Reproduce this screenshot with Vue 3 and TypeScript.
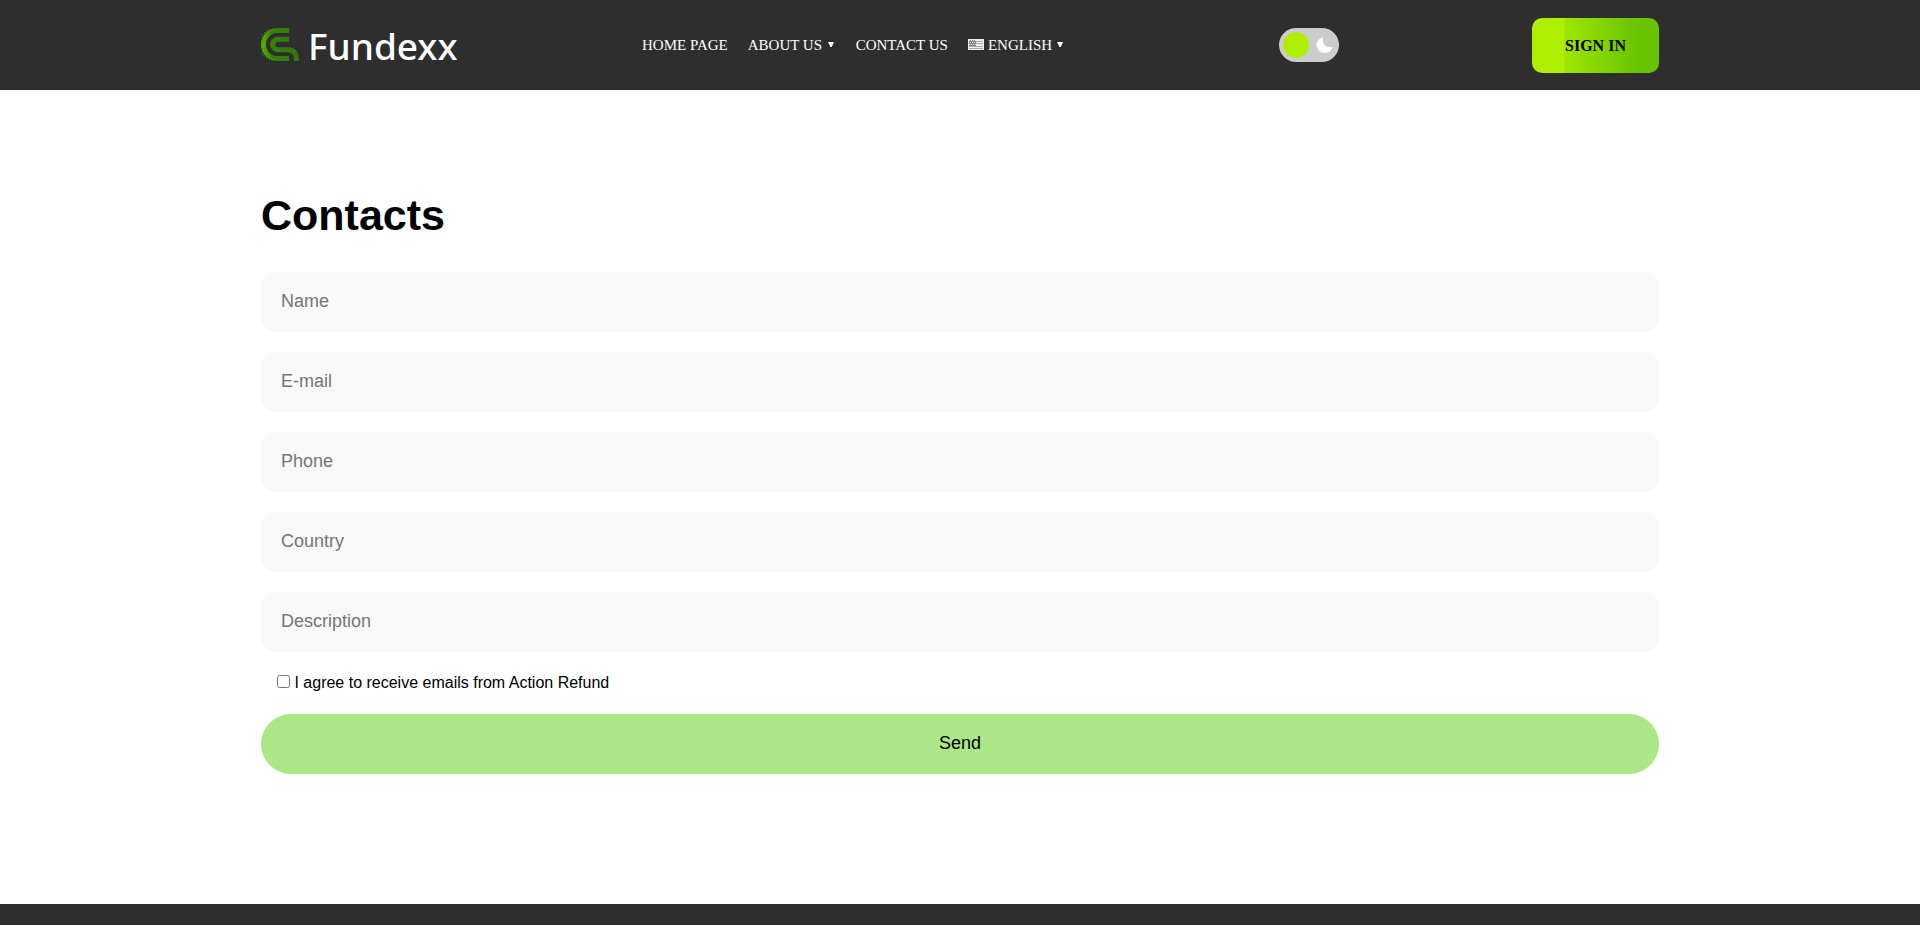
<script setup lang="ts">
import { ref } from 'vue'

interface Field {
  name: string
  type: string
  label: string
}

const fields: Field[] = [
  { name: 'name', type: 'text', label: 'Name' },
  { name: 'email', type: 'email', label: 'E-mail' },
  { name: 'phone', type: 'tel', label: 'Phone' },
  { name: 'country', type: 'text', label: 'Country' },
  { name: 'description', type: 'text', label: 'Description' },
]
const agreed = ref(false)
const dark = ref(false)
</script>

<template>
  <div class="page">
    <header class="header">
      <div class="container bar">
        <a class="logo">
          <svg width="204" height="54" viewBox="0 -4 204 54">
            <defs>
              <linearGradient id="mark" x1="0" x2="38" y1="0" y2="0" gradientUnits="userSpaceOnUse">
                <stop offset="0" stop-color="#55bb00" />
                <stop offset="0.3" stop-color="#378008" />
                <stop offset="1" stop-color="#327909" />
              </linearGradient>
            </defs>
            <g fill="none" stroke="url(#mark)" stroke-width="5">
              <path d="M28 8.500H16.500a14 14 0 0 0 0 28H28" />
              <path d="M28 17.200H17a5.200 5.200 0 0 0 0 10.500H27C33 27.700 35.500 31 35.500 39" />
            </g>
            <g fill="none" stroke-dasharray="1 2">
              <path stroke="#2e6f0a" d="M14 9.500a13 13 0 0 0 0 26" />
              <path stroke="#64cb00" d="M12.500 7.500a15 15 0 0 0 0 30" />
              <path stroke="#2e4a1e" d="M31 28.500C34.500 30 36.500 33 36.500 39" />
            </g>
            <text class="wordmark" x="47" y="38" textLength="149.500" lengthAdjust="spacingAndGlyphs">Fundexx</text>
          </svg>
        </a>
        <nav class="nav">
          <a class="item">HOME PAGE</a>
          <a class="item about">ABOUT US<i class="caret" /></a>
          <a class="item contact">CONTACT US</a>
          <a class="item language">
            <svg class="flag" width="16" height="11" viewBox="0 0 16 11">
              <path fill="#efefef" d="M0 0h16v11H0z" />
              <path stroke="#aaa" d="M8 2.500h7M8 4.500h7M1 7.500h14M1 9.500h14" />
              <path fill="#858585" d="M1 1h7v6H1z" />
              <path stroke="#e6e6e6" stroke-dasharray="1 1" d="M1 1.500h7M2 3.500h6M1 5.500h7" />
            </svg>ENGLISH<i class="caret" />
          </a>
        </nav>
        <button class="toggle" type="button" aria-label="Theme" @click="dark = !dark">
          <span class="knob" />
          <svg width="18" height="18" viewBox="0 0 18 18">
            <path fill="#fff" d="M7.300 1.300A7.900 7.900 0 0 0 9 17A8 8 0 0 0 16.700 10.700C10.500 13 5 8 7.300 1.300z" />
          </svg>
        </button>
        <a class="signin">SIGN IN</a>
      </div>
    </header>
    <main class="container main">
      <h1>Contacts</h1>
      <form @submit.prevent>
        <input v-for="field in fields" :key="field.name" class="field" :name="field.name" :type="field.type" :placeholder="field.label">
        <label class="agree"><input v-model="agreed" type="checkbox"><span>I agree to receive emails from Action Refund</span></label>
        <button class="send" type="submit">Send</button>
      </form>
    </main>
    <footer class="footer" />
  </div>
</template>

<style>
body { margin: 0; overflow: hidden; }
</style>

<style scoped>
.page { height: 925px; display: flex; flex-direction: column; background: #fff; font-family: "Liberation Sans", Arial, sans-serif; }
.header { height: 90px; flex: none; background: #2e2e2e; }
.container { width: 1398px; margin: 0 auto; }
.bar { height: 90px; display: flex; align-items: center; }
.logo { width: 381px; height: 54px; }
.logo svg { display: block; }
.wordmark { fill: #fff; font: 500 36px "Noto Sans", "Open Sans", sans-serif; }
.nav { display: flex; width: 637px; font: 15px/20px "Liberation Serif", "Times New Roman", serif; color: #fff; }
.item { display: flex; align-items: center; white-space: nowrap; margin-right: 20px; }
.caret { width: 6px; height: 5px; margin: 0 1.6px 1px 6px; background: #fff; clip-path: polygon(0 0, 100% 0, 60% 100%, 40% 100%); }
.flag { margin: -1px 4px 0 0; }
.language .caret { margin-left: 5px; }
.toggle { width: 60px; height: 34px; border: 0; border-radius: 17px; background: #ccc; display: flex; align-items: center; justify-content: space-between; padding: 0 5px 0 4px; }
.knob { width: 26px; height: 26px; border-radius: 50%; background: #aeef00; }
.signin { margin-left: auto; width: 127px; height: 55px; border-radius: 10px; background: linear-gradient(90deg, #aeef00 0 25%, #9fe500 26%, #69c400 82% 100%); text-align: center; color: #000; font: bold 16px/55px "Liberation Serif", "Times New Roman", serif; }
.main { flex: 1; }
h1 { margin: 100px 0 32px; font-size: 43px; line-height: 50px; font-weight: bold; color: #000; }
form { display: flex; flex-direction: column; }
.field { height: 60px; box-sizing: border-box; border: 0; border-radius: 15px; margin: 0 0 20px; padding: 0 20px 2px; background: #f8f8f8; font: 18px "Liberation Sans", Arial, sans-serif; outline: 0; }
.field::placeholder { color: #757575; }
.agree { height: 22px; display: flex; align-items: center; gap: 4.45px; padding-left: 16px; font-size: 16px; line-height: 20px; color: #000; }
.agree input { width: 13px; height: 13px; margin: 0 0 3px; }
.send { height: 60px; margin-top: 20px; padding: 0 0 2px; border: 0; border-radius: 30px; background: #abe687; color: #000; font: 18px "Liberation Sans", Arial, sans-serif; }
.footer { height: 21px; flex: none; background: #2e2e2e; }
</style>
